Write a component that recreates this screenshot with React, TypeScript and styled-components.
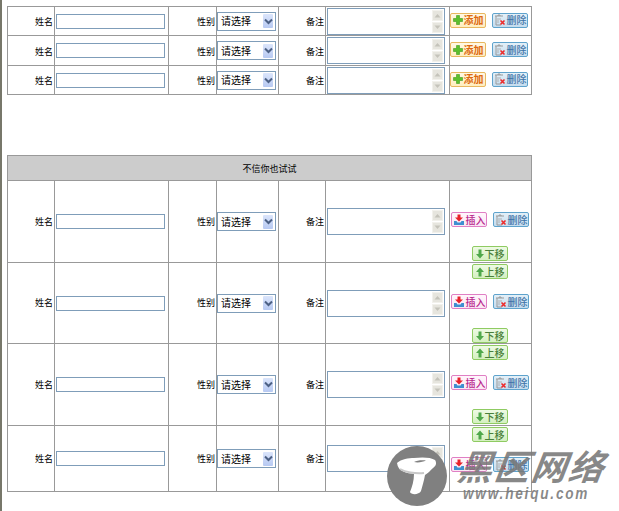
import React from 'react';
import styled, { createGlobalStyle } from 'styled-components';

type Tone = 'add' | 'del' | 'insert' | 'move';

const tones = {
  add: { border: '#e8b860', bg: 'linear-gradient(#fff8e4, #ffeec0)', color: '#dd6a10' },
  del: { border: '#5fa3cc', bg: 'linear-gradient(#e4f0f8, #c4dcee)', color: '#3f74a8' },
  insert: { border: '#e07fc4', bg: 'linear-gradient(#fff6fc, #fbe6f4)', color: '#b8288c' },
  move: { border: '#8fcb62', bg: 'linear-gradient(#eefae4, #d4f0c0)', color: '#4a7f3a' }
};

const GlobalStyle = createGlobalStyle`
  html, body {
    margin: 0;
    padding: 0;
    background: #fff;
  }
  body {
    font-family: "Noto Sans CJK SC", "Liberation Sans", sans-serif;
    font-size: 9px;
    color: #000;
  }
`;

const Page = styled.div`
  position: relative;
  width: 619px;
  height: 511px;
  box-sizing: border-box;
  overflow: hidden;
  border-left: 2px solid #77776a;
  padding: 6px 0 0 5px;
`;

const Grid = styled.table`
  table-layout: fixed;
  width: 524px;
  border-collapse: collapse;
  & + & {
    margin-top: 60px;
  }
`;

const Cell = styled.td<{ $h?: number }>`
  border: 1px solid #999;
  padding: 0;
  height: ${p => p.$h ?? 29}px;
  vertical-align: middle;
  overflow: hidden;
`;

const HeaderCell = styled.td`
  border: 1px solid #999;
  background: #ccc;
  height: 24px;
  padding: 0;
  text-align: center;
  font-size: 9px;
`;

const LabelCell = styled.td<{ $h: number; $drop?: boolean }>`
  border: 1px solid #999;
  text-align: right;
  vertical-align: middle;
  padding: ${p => (p.$drop ? 2 : 0)}px 1px 0 0;
  height: ${p => p.$h - (p.$drop ? 2 : 0)}px;
  font-size: 9px;
  line-height: 12px;
`;

const NameInput = styled.input`
  display: block;
  box-sizing: border-box;
  width: 109px;
  height: 15px;
  margin-left: 1px;
  padding: 0;
  border: 1px solid #7f9db9;
  background: #fff;
  outline: none;
`;

const SelectBox = styled.div`
  display: flex;
  align-items: center;
  box-sizing: border-box;
  width: 59px;
  height: 19px;
  padding: 1px 2px 1px 3px;
  border: 1px solid #7f9db9;
  background: #fff;
  font-size: 10px;
  line-height: 12px;
`;

const SelectText = styled.span`
  flex: 1;
`;

const SelectArrow = styled.div`
  display: flex;
  align-items: center;
  justify-content: center;
  width: 10px;
  height: 14px;
  border-radius: 1px;
  background: linear-gradient(#dbe5fb, #b7c9f2);
`;

const NoteBox = styled.div`
  display: flex;
  box-sizing: border-box;
  width: 118px;
  height: 27px;
  margin: 0 0 0 1px;
  padding: 1px;
  border: 1px solid #7f9db9;
  background: #fff;
`;

const NoteArea = styled.textarea`
  flex: 1;
  min-width: 0;
  border: none;
  padding: 0;
  margin: 0;
  resize: none;
  outline: none;
  overflow: hidden;
  background: #fff;
`;

const NoteScroll = styled.div`
  display: flex;
  flex-direction: column;
  justify-content: space-between;
  width: 11px;
`;

const ScrollArrow = styled.div`
  display: flex;
  align-items: center;
  justify-content: center;
  height: 11px;
  border: 1px solid #f2f1ec;
  box-sizing: border-box;
  background: #e6e5de;
`;

const ActionRow = styled.div<{ $left: number }>`
  display: flex;
  gap: 6px;
  padding-left: ${p => p.$left}px;
`;

const ActionStack = styled.div`
  display: flex;
  flex-direction: column;
  padding-top: 1px;
`;

const MoveSlot = styled.div`
  display: flex;
  justify-content: center;
  height: 15px;
  padding-right: 1px;
`;

const MiddleSlot = styled.div`
  margin: 15px 0 19px;
`;

const TightSlot = styled.div`
  margin-top: 15px;
`;

const ActionButton = styled.button<{ $tone: Tone }>`
  display: flex;
  align-items: center;
  justify-content: center;
  gap: 1px;
  box-sizing: border-box;
  width: 36px;
  height: 15px;
  padding: 0;
  border: 1px solid ${p => tones[p.$tone].border};
  border-radius: 2px;
  background: ${p => tones[p.$tone].bg};
  color: ${p => tones[p.$tone].color};
  font-family: "Noto Sans CJK SC", sans-serif;
  font-size: 10px;
  font-weight: ${p => (p.$tone === 'add' ? 700 : 500)};
  line-height: 12px;
  white-space: nowrap;
`;

const TopActionCell = styled(Cell)`
  vertical-align: middle;
  padding-bottom: 2px;
`;

const StackCell = styled(Cell)`
  vertical-align: top;
`;

const Watermark = styled.div`
  position: absolute;
  left: 385px;
  top: 446px;
  display: flex;
  gap: 11px;
  pointer-events: none;
`;

const WatermarkBadge = styled.div`
  display: flex;
  width: 60px;
  height: 60px;
  border-radius: 50%;
  background: #808080;
`;

const WatermarkText = styled.div`
  display: flex;
  flex-direction: column;
  color: rgba(120, 120, 120, 0.88);
  font-style: italic;
  white-space: nowrap;
`;

const WatermarkTitle = styled.div`
  font-family: "Noto Sans CJK SC", sans-serif;
  font-size: 35px;
  font-weight: 700;
  line-height: 38px;
  letter-spacing: 2px;
  transform: skewX(-8deg);
`;

const WatermarkUrl = styled.div`
  width: 158px;
  font-family: "Liberation Sans", sans-serif;
  font-size: 16px;
  font-weight: 700;
  line-height: 16px;
  letter-spacing: 2.1px;
  margin: 2px 0 0 5px;
  transform: scaleX(0.85);
  transform-origin: left center;
`;

const Chevron = () => (
  <svg width="9" height="7" viewBox="0 0 9 7">
    <path d="M1 1.5 L4.5 5 L8 1.5" fill="none" stroke="#4d6185" strokeWidth="2" />
  </svg>
);

const ScrollGlyph = ({ up }: { up?: boolean }) => (
  <svg width="7" height="5" viewBox="0 0 7 5">
    <path d={up ? 'M0.5 4.5 L3.5 1 L6.5 4.5 Z' : 'M0.5 0.5 L3.5 4 L6.5 0.5 Z'} fill="#c4c3ba" />
  </svg>
);

const PlusIcon = () => (
  <svg width="10" height="10" viewBox="0 0 10 10">
    <path d="M3.5 0.5h3v3h3v3h-3v3h-3v-3h-3v-3h3z" fill="#5cc02c" stroke="#3f9a1c" strokeWidth="0.6" />
  </svg>
);

const TrashIcon = () => (
  <svg width="12" height="12" viewBox="0 0 12 12">
    <path d="M1 2h8M4 2V1h2v1M2 2v9h5" fill="none" stroke="#9a9a9a" strokeWidth="1" />
    <path d="M4 4v5M6 4v2" stroke="#b0b0b0" strokeWidth="1" />
    <path d="M6.5 6.5l4 4M10.5 6.5l-4 4" stroke="#ee2a2a" strokeWidth="1.6" />
  </svg>
);

const InsertIcon = () => (
  <svg width="12" height="12" viewBox="0 0 12 12">
    <path d="M1 7h2.5l1 1.5h3l1-1.5H11v4H1z" fill="#3f8fd0" />
    <path d="M4.5 0.5h3v3H10L6 7.5 2 3.5h2.5z" fill="#e8202a" />
  </svg>
);

const MoveIcon = ({ up }: { up?: boolean }) => (
  <svg width="8" height="10" viewBox="0 0 8 10">
    <path
      d={up ? 'M4 0.5 L8 5 H5.5 V9.5 H2.5 V5 H0 Z' : 'M2.5 0.5 H5.5 V5 H8 L4 9.5 L0 5 H2.5 Z'}
      fill="#4fa84a"
    />
  </svg>
);

const Mushroom = () => (
  <svg width="60" height="60" viewBox="0 0 60 60">
    <path
      d="M10 17 C14 13 22 12 27 12 C34 11 44 11 48 14 C50 17 49 20 46 22 C43 25 41 27 38 29 C37 35 35 41 34 45 C32 49 24 49 23 46 C25 41 27 35 27 28 C20 27 11 26 10 17 Z"
      fill="#fff"
    />
    <path d="M27 16 C30 14 36 14 39 14.5 C36 16 31 17 27 16 Z" fill="#808080" />
    <path d="M13 23 C18 26 28 28 37 27" fill="none" stroke="#c8c8c8" strokeWidth="2" />
  </svg>
);

const FieldCells = ({ h, drop }: { h: number; drop?: boolean }) => (
  <>
    <LabelCell $h={h} $drop={drop}>姓名</LabelCell>
    <Cell $h={h}>
      <NameInput type="text" />
    </Cell>
    <LabelCell $h={h} $drop={drop}>性别</LabelCell>
    <Cell $h={h}>
      <SelectBox>
        <SelectText>请选择</SelectText>
        <SelectArrow>
          <Chevron />
        </SelectArrow>
      </SelectBox>
    </Cell>
    <LabelCell $h={h} $drop={drop}>备注</LabelCell>
    <Cell $h={h}>
      <NoteBox>
        <NoteArea />
        <NoteScroll>
          <ScrollArrow>
            <ScrollGlyph up />
          </ScrollArrow>
          <ScrollArrow>
            <ScrollGlyph />
          </ScrollArrow>
        </NoteScroll>
      </NoteBox>
    </Cell>
  </>
);

const Columns = () => (
  <colgroup>
    <col style={{ width: 47 }} />
    <col style={{ width: 114 }} />
    <col style={{ width: 48 }} />
    <col style={{ width: 62 }} />
    <col style={{ width: 47 }} />
    <col style={{ width: 124 }} />
    <col style={{ width: 82 }} />
  </colgroup>
);

const DeleteButton = () => (
  <ActionButton $tone="del">
    <TrashIcon />
    删除
  </ActionButton>
);

const topRows = [28, 29, 28];
const sortRows = [
  { h: 81, up: false, down: true },
  { h: 80, up: true, down: true },
  { h: 81, up: true, down: true },
  { h: 65, up: true, down: false }
];

export default function App() {
  return (
    <Page>
      <GlobalStyle />
      <Grid>
        <Columns />
        <tbody>
          {topRows.map((h, i) => (
            <tr key={i}>
              <FieldCells h={h} drop />
              <TopActionCell $h={h - 2}>
                <ActionRow $left={0}>
                  <ActionButton $tone="add">
                    <PlusIcon />
                    添加
                  </ActionButton>
                  <DeleteButton />
                </ActionRow>
              </TopActionCell>
            </tr>
          ))}
        </tbody>
      </Grid>
      <Grid>
        <Columns />
        <tbody>
          <tr>
            <HeaderCell colSpan={7}>不信你也试试</HeaderCell>
          </tr>
          {sortRows.map((row, i) => {
            const Slot = row.down ? MiddleSlot : TightSlot;
            return (
              <tr key={i}>
                <FieldCells h={row.h} />
                <StackCell $h={row.h}>
                  <ActionStack>
                    <MoveSlot>
                      {row.up && (
                        <ActionButton $tone="move">
                          <MoveIcon up />
                          上移
                        </ActionButton>
                      )}
                    </MoveSlot>
                    <Slot>
                      <ActionRow $left={1}>
                        <ActionButton $tone="insert">
                          <InsertIcon />
                          插入
                        </ActionButton>
                        <DeleteButton />
                      </ActionRow>
                    </Slot>
                    {row.down && (
                      <MoveSlot>
                        <ActionButton $tone="move">
                          <MoveIcon />
                          下移
                        </ActionButton>
                      </MoveSlot>
                    )}
                  </ActionStack>
                </StackCell>
              </tr>
            );
          })}
        </tbody>
      </Grid>
      <Watermark>
        <WatermarkBadge>
          <Mushroom />
        </WatermarkBadge>
        <WatermarkText>
          <WatermarkTitle>黑区网络</WatermarkTitle>
          <WatermarkUrl>www.heiqu.com</WatermarkUrl>
        </WatermarkText>
      </Watermark>
    </Page>
  );
}
